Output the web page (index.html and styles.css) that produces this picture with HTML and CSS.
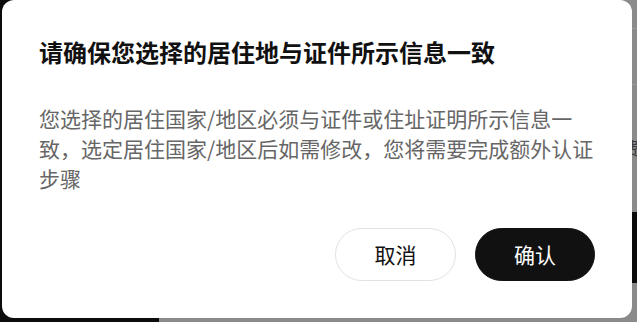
FILE: index.html
```html
<!DOCTYPE html>
<html lang="zh-CN">
<head>
<meta charset="utf-8">
<title>确认居住地</title>
<link rel="stylesheet" href="styles.css">
</head>
<body>
<div class="backdrop">
  <div class="bg-sidebar"></div>
  <div class="bg-line bg-line-1"></div>
  <div class="bg-line bg-line-2"></div>
  <span class="bg-glyph">费</span>
  <div class="bg-block"></div>
</div>
<div class="modal" role="dialog">
  <h2 class="modal-title">请确保您选择的居住地与证件所示信息一致</h2>
  <p class="modal-text">您选择的居住国家/地区必须与证件或住址证明所示信息一致，选定居住国家/地区后如需修改，您将需要完成额外认证步骤</p>
  <div class="modal-actions">
    <button class="btn btn-cancel">取消</button>
    <button class="btn btn-confirm">确认</button>
  </div>
</div>
</body>
</html>
```

FILE: styles.css
```css
html, body {
  margin: 0;
  padding: 0;
}
body {
  width: 637px;
  height: 322px;
  overflow: hidden;
  position: relative;
  background: #8a8a8a;
  font-family: "Noto Sans CJK SC", "Noto Sans", sans-serif;
}
.backdrop {
  position: absolute;
  inset: 0;
}
.bg-sidebar {
  position: absolute;
  left: 0;
  top: 0;
  width: 159px;
  height: 322px;
  background: #0c0c0c;
}
.bg-line {
  position: absolute;
  left: 600px;
  width: 37px;
  height: 1px;
  background: #9a9a9a;
}
.bg-line-1 { top: 28px; }
.bg-line-2 { top: 84px; }
.bg-glyph {
  position: absolute;
  left: 622px;
  top: 136px;
  font-size: 17px;
  line-height: 24px;
  color: #3a3a3a;
}
.bg-block {
  position: absolute;
  left: 600px;
  top: 212px;
  width: 37px;
  height: 71px;
  background: #0c0c0c;
}
.modal {
  position: relative;
  margin-left: 2px;
  width: 630px;
  height: 318px;
  box-sizing: border-box;
  padding: 36px 37px 37px;
  background: #fff;
  border-radius: 12px;
  display: flex;
  flex-direction: column;
}
.modal-title {
  margin: 0;
  font-size: 24px;
  line-height: 32px;
  font-weight: 700;
  color: #111;
}
.modal-text {
  margin: 35px 0 0;
  font-size: 21px;
  line-height: 30px;
  color: #666;
}
.modal-actions {
  margin-top: 35px;
  display: flex;
  justify-content: flex-end;
  gap: 19px;
}
.btn {
  height: 53px;
  width: 121px;
  border-radius: 27px;
  font-family: inherit;
  font-size: 21px;
  line-height: 1;
  padding: 0;
  cursor: pointer;
}
.btn-cancel {
  background: #fff;
  border: 1px solid #e2e2e2;
  color: #111;
}
.btn-confirm {
  width: 120px;
  background: #111;
  border: 1px solid #111;
  color: #fff;
}
```
